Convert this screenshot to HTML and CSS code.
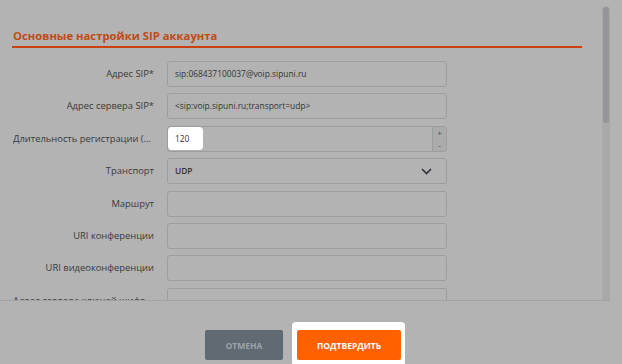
FILE: index.html
```html
<!DOCTYPE html>
<html lang="ru">
<head>
    <meta charset="UTF-8">
    <meta name="viewport" content="width=device-width, initial-scale=1.0">
    <title>Основные настройки SIP аккаунта</title>
    <link rel="stylesheet" href="styles.css">
</head>
<body>
    <div class="dialog">
        <div class="scroll-area">
            <div class="content">
                <h2 class="section-title">Основные настройки SIP аккаунта</h2>

                <div class="form">
                    <label class="label">Адрес SIP*</label>
                    <div class="field">sip:068437100037@voip.sipuni.ru</div>

                    <label class="label">Адрес сервера SIP*</label>
                    <div class="field">&lt;sip:voip.sipuni.ru;transport=udp&gt;</div>

                    <label class="label">Длительность регистрации (сек)</label>
                    <div class="field field-number">
                        <span class="number-value">120</span>
                        <span class="spinner">
                            <span>+</span>
                            <span>-</span>
                        </span>
                    </div>

                    <label class="label">Транспорт</label>
                    <div class="field field-select">
                        <span>UDP</span>
                        <svg class="chevron" width="11" height="7" viewBox="0 0 11 7">
                            <path d="M1 1 L5.5 5.5 L10 1" fill="none" stroke="#2f3338" stroke-width="1.6"/>
                        </svg>
                    </div>

                    <label class="label">Маршрут</label>
                    <div class="field"></div>

                    <label class="label">URI конференции</label>
                    <div class="field"></div>

                    <label class="label">URI видеоконференции</label>
                    <div class="field"></div>

                    <label class="label">Адрес сервера ключей шифрования</label>
                    <div class="field"></div>
                </div>
            </div>
            <div class="scrollbar">
                <div class="thumb"></div>
            </div>
        </div>

        <div class="footer">
            <button class="btn btn-cancel">Отмена</button>
            <span class="highlight">
                <button class="btn btn-confirm">Подтвердить</button>
            </span>
        </div>
    </div>
</body>
</html>
```

FILE: styles.css
```css
body {
    font-family: 'Open Sans', 'Noto Sans', sans-serif;
    margin: 0;
    background-color: #b3b3b3;
    color: #3a3a3a;
    overflow: hidden;
}
.dialog {
    width: 610px;
    height: 364px;
}
.scroll-area {
    display: flex;
    height: 300px;
    border-bottom: 1px solid #a2a2a2;
    overflow: hidden;
}
.content {
    flex: 1;
    padding: 0 20px 0 12px;
}
.section-title {
    margin: 28px 0 0 0;
    padding: 0 0 3px 1px;
    font-size: 11.3px;
    line-height: 15px;
    font-weight: 700;
    color: #c24a14;
    border-bottom: 2px solid #c8410e;
}
.form {
    display: grid;
    grid-template-columns: 141px 280px;
    column-gap: 13px;
    row-gap: 6.4px;
    margin-top: 13px;
    padding-left: 1px;
}
.label {
    font-size: 9.4px;
    line-height: 26px;
    text-align: right;
    white-space: nowrap;
    overflow: hidden;
    text-overflow: ellipsis;
}
.field {
    box-sizing: border-box;
    height: 26px;
    border: 1px solid #9d9d9d;
    border-radius: 3px;
    padding: 0 7px;
    font-size: 8.4px;
    line-height: 24px;
    color: #333333;
    white-space: nowrap;
    overflow: hidden;
}
.field-number {
    display: flex;
    padding: 0;
}
.number-value {
    width: 35px;
    height: 23px;
    padding-left: 7px;
    box-sizing: border-box;
    background: #ffffff;
    border-radius: 4px;
    line-height: 23px;
}
.spinner {
    margin-left: auto;
    width: 13px;
    display: flex;
    flex-direction: column;
    justify-content: space-around;
    align-items: center;
    background: #ababab;
    border-left: 1px solid #9d9d9d;
    font-size: 8px;
    line-height: 8px;
    color: #4a4a4a;
}
.field-select {
    display: flex;
    align-items: center;
    justify-content: space-between;
    padding-right: 14px;
    font-weight: 600;
}
.chevron {
    display: block;
}
.scrollbar {
    width: 8px;
    margin-top: 6px;
    background: #a9a9a9;
    border-radius: 4px 4px 0 0;
}
.thumb {
    width: 6px;
    height: 116px;
    margin: 1px auto 0;
    background: #939598;
    border-radius: 3px;
}
.footer {
    display: flex;
    justify-content: center;
    align-items: flex-start;
    gap: 9px;
    padding-top: 21px;
    padding-left: 0;
}
.btn {
    font-family: 'Open Sans', 'Noto Sans', sans-serif;
    font-size: 8.5px;
    font-weight: 700;
    text-transform: uppercase;
    border: none;
    border-radius: 2px;
    height: 30px;
    cursor: pointer;
}
.btn-cancel {
    width: 78px;
    margin-top: 8px;
    background: #5f6a73;
    color: #9ea3a8;
}
.highlight {
    display: block;
    background: #ffffff;
    border-radius: 4px;
    padding: 8px 4px 6px 5px;
}
.btn-confirm {
    display: block;
    width: 104px;
    background: #ff6000;
    color: #ffffff;
}
```
